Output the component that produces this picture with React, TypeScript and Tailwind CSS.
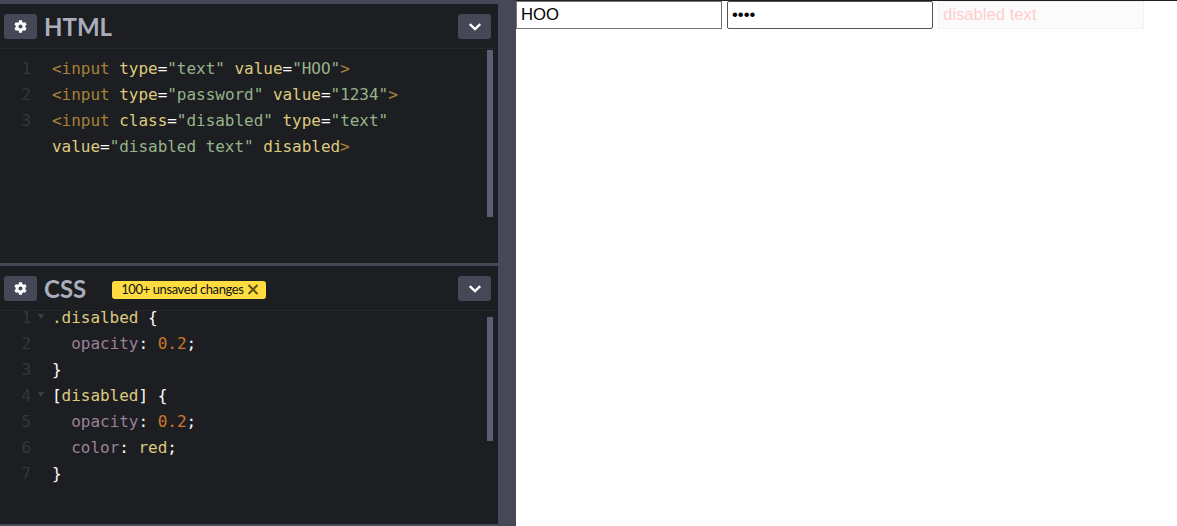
import React from 'react';
import { FaCog } from 'react-icons/fa';

const tag = 'text-[#a88038]';
const attr = 'text-[#ddca7e]';
const str = 'text-[#96b38a]';
const prop = 'text-[#9a8297]';
const num = 'text-[#d0782a]';
const punct = 'text-[#fcfcfc]';

function Chevron() {
  return (
    <svg width="14" height="10" viewBox="0 0 14 10" fill="none">
      <path d="M1.8 2.2 7 7.2l5.2-5" stroke="#fff" strokeWidth="2.4" />
    </svg>
  );
}

function HeaderButton({ children }: { children: React.ReactNode }) {
  return (
    <div className="w-[33px] h-[25px] rounded-[3px] bg-[#444857] flex items-center justify-center shrink-0">
      {children}
    </div>
  );
}

function Header({ title, children }: { title: string; children?: React.ReactNode }) {
  return (
    <div className="h-[45px] shrink-0 flex items-center pl-1 pr-[7px] pt-[1px] bg-[#1d1e22] border-b border-[#26272c] relative z-10">
      <HeaderButton>
        <FaCog className="text-white w-[13px] h-[13px]" />
      </HeaderButton>
      <span className="ml-[7px] text-[24px] leading-none font-bold text-[#aaaebc] font-['Lato',sans-serif]">{title}</span>
      {children}
      <div className="ml-auto">
        <HeaderButton>
          <Chevron />
        </HeaderButton>
      </div>
    </div>
  );
}

function Line({ n, fold, children }: { n?: number; fold?: boolean; children: React.ReactNode }) {
  return (
    <div className="flex h-[26px] leading-[26px]">
      <div className="w-[31px] text-right text-[#34363e] shrink-0">{n}</div>
      <div className="w-[21px] shrink-0 relative">
        {fold && <span className="absolute left-[7px] top-[9px] w-0 h-0 border-x-[3px] border-x-transparent border-t-[5px] border-t-[#3c3e46]" />}
      </div>
      <div className="whitespace-pre">{children}</div>
    </div>
  );
}

export default function App() {
  return (
    <div className="w-[1177px] h-[526px] overflow-hidden flex bg-white">
      <div className="w-[516px] h-full shrink-0 bg-[#444857] flex flex-col pt-[4px] pr-[18px] pb-[2px]">
        <div className="h-[259px] shrink-0 bg-[#1d1e22] flex flex-col relative overflow-hidden">
          <Header title="HTML" />
          <div className="pt-[7px] text-[16px] tracking-[-0.03px] font-['DejaVu_Sans_Mono',monospace]">
            <Line n={1}>
              <span className={tag}>&lt;input</span> <span className={attr}>type</span><span className={punct}>=</span><span className={str}>"text"</span> <span className={attr}>value</span><span className={punct}>=</span><span className={str}>"HOO"</span><span className={tag}>&gt;</span>
            </Line>
            <Line n={2}>
              <span className={tag}>&lt;input</span> <span className={attr}>type</span><span className={punct}>=</span><span className={str}>"password"</span> <span className={attr}>value</span><span className={punct}>=</span><span className={str}>"1234"</span><span className={tag}>&gt;</span>
            </Line>
            <Line n={3}>
              <span className={tag}>&lt;input</span> <span className={attr}>class</span><span className={punct}>=</span><span className={str}>"disabled"</span> <span className={attr}>type</span><span className={punct}>=</span><span className={str}>"text"</span>
            </Line>
            <Line>
              <span className={attr}>value</span><span className={punct}>=</span><span className={str}>"disabled text"</span> <span className={attr}>disabled</span><span className={tag}>&gt;</span>
            </Line>
          </div>
          <div className="absolute left-[487px] top-[46px] w-[6px] h-[167px] bg-[#5a5f73]" />
        </div>
        <div className="h-[3px] shrink-0" />
        <div className="flex-1 bg-[#1d1e22] flex flex-col relative overflow-hidden">
          <Header title="CSS">
            <div className="ml-[26px] mt-[2px] h-[18px] w-[154px] rounded-[3px] bg-[#ffdd40] flex items-center pl-[9px] text-[13px] tracking-[-0.4px] text-[#111] font-['Lato',sans-serif]">
              <span>100+ unsaved changes</span>
              <svg className="ml-[3px]" width="12" height="11" viewBox="0 0 12 11" fill="none">
                <path d="M1.5 1l9 9M10.5 1l-9 9" stroke="#5c5212" strokeWidth="2" />
              </svg>
            </div>
          </Header>
          <div className="mt-[-6px] text-[16px] tracking-[-0.03px] font-['DejaVu_Sans_Mono',monospace]">
            <Line n={1} fold>
              <span className={attr}>.disalbed</span> <span className={punct}>{'{'}</span>
            </Line>
            <Line n={2}>
              {'  '}<span className={prop}>opacity</span><span className={punct}>:</span> <span className={num}>0.2</span><span className={punct}>;</span>
            </Line>
            <Line n={3}>
              <span className={punct}>{'}'}</span>
            </Line>
            <Line n={4} fold>
              <span className={punct}>[</span><span className={attr}>disabled</span><span className={punct}>]</span> <span className={punct}>{'{'}</span>
            </Line>
            <Line n={5}>
              {'  '}<span className={prop}>opacity</span><span className={punct}>:</span> <span className={num}>0.2</span><span className={punct}>;</span>
            </Line>
            <Line n={6}>
              {'  '}<span className={prop}>color</span><span className={punct}>:</span> <span className={attr}>red</span><span className={punct}>;</span>
            </Line>
            <Line n={7}>
              <span className={punct}>{'}'}</span>
            </Line>
          </div>
          <div className="absolute left-[487px] top-[51px] w-[6px] h-[124px] bg-[#5a5f73]" />
        </div>
      </div>
      <div className="flex-1 min-w-0 h-full border-t border-[#1d1e22]">
        <div className="flex gap-[5px] font-['Liberation_Sans',Arial,sans-serif] text-[16.67px]">
          <input readOnly type="text" value="HOO" className="w-[206px] h-[28px] px-1 border border-[#767676] text-black outline-none" />
          <input readOnly type="password" value="1234" className="w-[206px] h-[28px] px-1 border border-[#555] rounded-[2px] text-black outline-none" />
          <input disabled type="text" value="disabled text" className="w-[206px] h-[28px] px-1 border border-[#c3c3c3] bg-[#efefef] text-[red] opacity-20 outline-none" />
        </div>
      </div>
    </div>
  );
}
